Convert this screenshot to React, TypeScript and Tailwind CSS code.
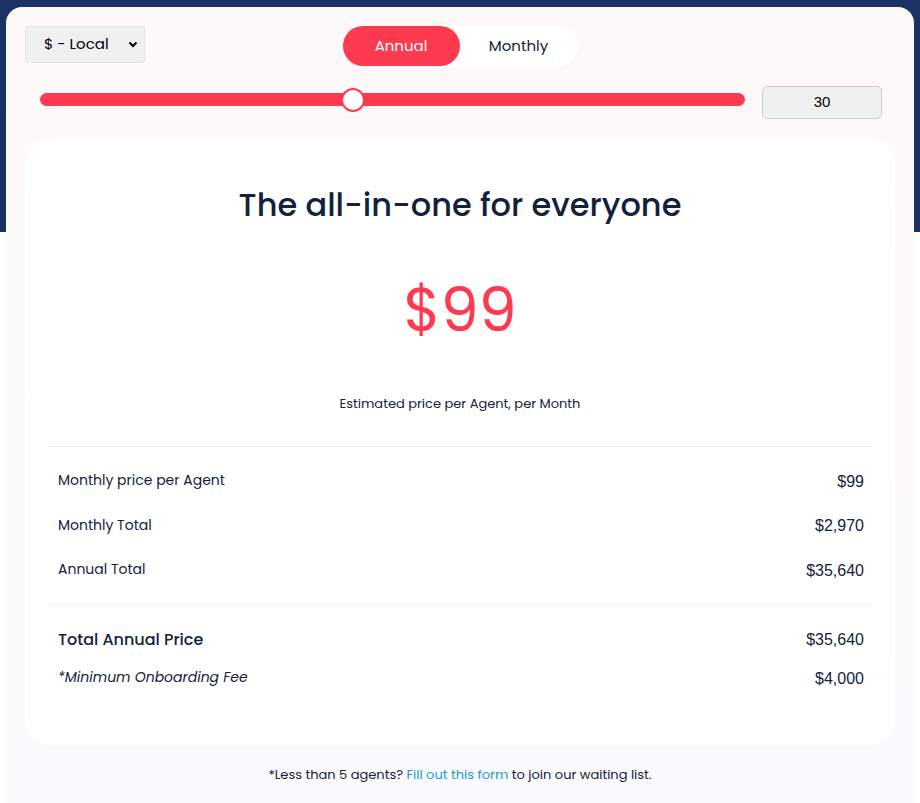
import React from 'react';

const rows = [
    { label: 'Monthly price per Agent', value: '$99' },
    { label: 'Monthly Total', value: '$2,970' },
    { label: 'Annual Total', value: '$35,640' },
];

function App() {
    return (
        <div className="min-h-[803px] flex flex-col bg-[linear-gradient(to_bottom,#1b3264_232px,#ffffff_232px)] px-[6px] pt-[7px] font-['Poppins','Open_Sans',sans-serif] text-[#14213d]">
            <div className="flex-1 rounded-t-[16px] bg-[linear-gradient(to_bottom,#fdf9f8,#fafafc)] px-[19px] pt-[19px] pb-[12px]">
                <div className="flex items-start">
                    <div className="w-[120px] h-[37px] flex items-center justify-between bg-[#f0f0f0] border border-[#e3e3e3] rounded-[3px] pl-[18px] pr-[6px] text-[15px] text-black">
                        <span>$ - Local</span>
                        <svg width="10" height="7" viewBox="0 0 10 7">
                            <path d="M1.5 1.5 L5 5 L8.5 1.5" stroke="#000" strokeWidth="2" fill="none" />
                        </svg>
                    </div>
                    <div className="flex-1 flex justify-center pr-[120px]">
                        <div className="flex bg-white rounded-full h-[40px] w-[235px]">
                            <button className="w-[117px] rounded-full bg-[#fd3a4f] text-white text-[15px]">Annual</button>
                            <button className="flex-1 text-[15px] text-[#14213d]">Monthly</button>
                        </div>
                    </div>
                </div>

                <div className="flex items-center mt-[20px] mb-[20px]">
                    <div className="ml-[15px] w-[705px] h-[13px] bg-[#fd3a4f] rounded-full flex items-center -translate-y-[3px]">
                        <div className="ml-[301px] w-[24px] h-[24px] rounded-full bg-white border-2 border-[#fd3a4f]" />
                    </div>
                    <div className="ml-[17px] w-[120px] h-[33px] flex items-center justify-center bg-[#f0f0f0] border border-[#cccccc] rounded-[5px] font-['Liberation_Sans',Arial,sans-serif] text-[15px] text-black">
                        30
                    </div>
                </div>

                <div className="bg-white rounded-[24px] px-[23px] pt-[46px] pb-[56px]">
                    <h1 className="text-center text-[32px] font-medium leading-[40px]">The all-in-one for everyone</h1>
                    <div className="text-center text-[#fd3a4f] text-[60px] leading-[80px] mt-[45px]">$99</div>
                    <p className="text-center text-[13px] mt-[44px]">Estimated price per Agent, per Month</p>

                    <div className="border-t border-[#f0f0f0] mt-[32px] pl-[10px] pr-[8px] pt-[23px] pb-[23px] flex flex-col gap-[22.5px]">
                        {rows.map((r) => (
                            <div key={r.label} className="flex justify-between items-center h-[22px]">
                                <span className="text-[14px]">{r.label}</span>
                                <span className="text-[16px] font-['Liberation_Sans',Arial,sans-serif] translate-y-[1px]">{r.value}</span>
                            </div>
                        ))}
                    </div>

                    <div className="border-t border-[#f0f0f0] pl-[10px] pr-[8px] pt-[24px] flex flex-col gap-[16px]">
                        <div className="flex justify-between items-center h-[22px]">
                            <span className="text-[16px] font-medium">Total Annual Price</span>
                            <span className="text-[16px] font-['Liberation_Sans',Arial,sans-serif]">$35,640</span>
                        </div>
                        <div className="flex justify-between items-center h-[22px]">
                            <span className="text-[14px] italic">*Minimum Onboarding Fee</span>
                            <span className="text-[16px] font-['Liberation_Sans',Arial,sans-serif] translate-y-[1px]">$4,000</span>
                        </div>
                    </div>
                </div>

                <p className="text-center text-[13px] mt-[20px]">
                    *Less than 5 agents? <a className="text-[#1a9ad6]">Fill out this form</a> to join our waiting list.
                </p>
            </div>
        </div>
    );
}

export default App;
